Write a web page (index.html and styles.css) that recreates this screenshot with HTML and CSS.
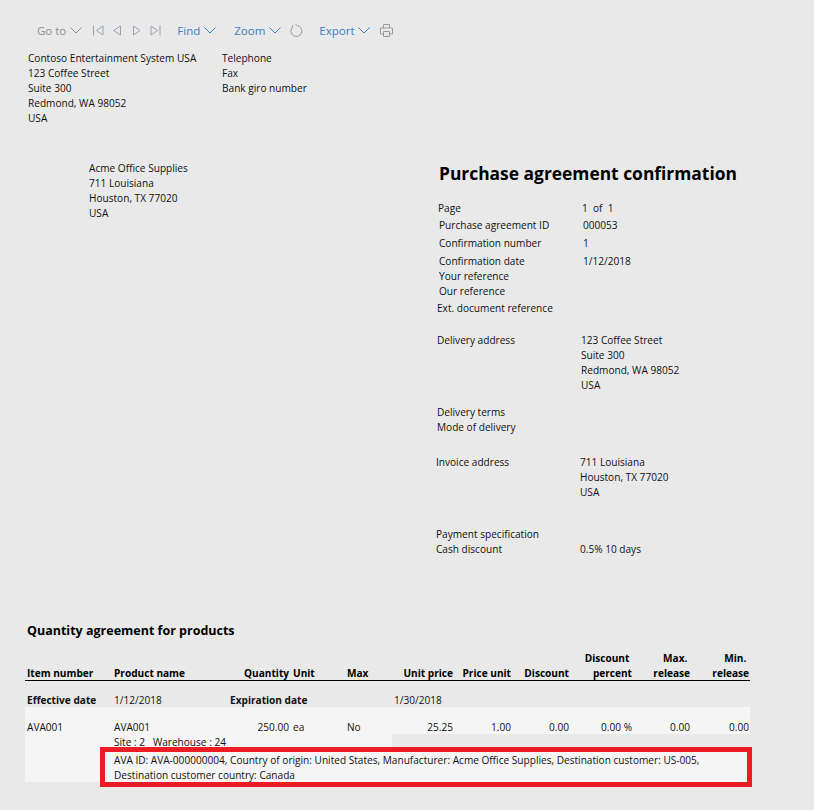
FILE: index.html
```html
<!DOCTYPE html>
<html>
<head>
	<title>Purchase agreement confirmation</title>
	<link rel="stylesheet" href="styles.css">
</head>
<body>
	<div class="toolbar">
		<span class="tool tool-off">Go to <svg class="chev" viewBox="0 0 12 7"><path d="M.5 .5L6 6l5.500-5.500"/></svg></span>
		<svg class="nav nav-first" viewBox="0 0 11 11"><path d="M.5 .5v10M10 1L3.500 5.500 10 10z"/></svg>
		<svg class="nav nav-prev" viewBox="0 0 11 11"><path d="M8.500 1L1.500 5.500l7 4.500z"/></svg>
		<svg class="nav nav-next" viewBox="0 0 11 11"><path d="M1.500 1l6.500 4.500-6.500 4.500z"/></svg>
		<svg class="nav nav-last" viewBox="0 0 11 11"><path d="M10 .5v10M1 1l6.500 4.500L1 10z"/></svg>
		<span class="tool find">Find <svg class="chev" viewBox="0 0 12 7"><path d="M.5 .5L6 6l5.500-5.500"/></svg></span>
		<span class="tool zoom">Zoom <svg class="chev" viewBox="0 0 12 7"><path d="M.5 .5L6 6l5.500-5.500"/></svg></span>
		<svg class="refresh" viewBox="0 0 13 13"><path d="M7.500 1.600A5.500 5.500 0 1 1 2.600 3M7.500 1.600L5.500 .5M2.600 3L2.400 1"/></svg>
		<span class="tool export">Export <svg class="chev" viewBox="0 0 12 7"><path d="M.5 .5L6 6l5.500-5.500"/></svg></span>
		<svg class="print" viewBox="0 0 13 13"><path d="M3.500 4V.5h6V4M3.500 10H.5V4h12v6h-3M3.500 7.500h6v5h-6z"/></svg>
	</div>

	<div class="company">
		<div class="company-addr">
			<div>Contoso Entertainment System USA</div>
			<div>123 Coffee Street</div>
			<div>Suite 300</div>
			<div>Redmond, WA 98052</div>
			<div>USA</div>
		</div>
		<div>
			<div>Telephone</div>
			<div>Fax</div>
			<div>Bank giro number</div>
		</div>
	</div>

	<div class="head">
		<div class="vendor">
			<div>Acme Office Supplies</div>
			<div>711 Louisiana</div>
			<div>Houston, TX 77020</div>
			<div>USA</div>
		</div>
		<div class="doc">
			<h1>Purchase agreement confirmation</h1>
			<div class="kv"><span>Page</span><span>1&nbsp; of&nbsp; 1</span></div>
			<div class="kv kv-id kv-agreement"><span>Purchase agreement ID</span><span>000053</span></div>
			<div class="kv kv-id kv-number"><span>Confirmation number</span><span>1</span></div>
			<div class="kv kv-id kv-date"><span>Confirmation date</span><span>1/12/2018</span></div>
			<div class="kv kv-id"><span>Your reference</span></div>
			<div class="kv kv-id"><span>Our reference</span></div>
			<div class="kv kv-ext"><span>Ext. document reference</span></div>

			<div class="kv kv-delivery">
				<span>Delivery address</span>
				<span>123 Coffee Street<br>Suite 300<br>Redmond, WA 98052<br>USA</span>
			</div>
			<div class="kv kv-terms"><span>Delivery terms<br>Mode of delivery</span></div>
			<div class="kv kv-invoice">
				<span>Invoice address</span>
				<span>711 Louisiana<br>Houston, TX 77020<br>USA</span>
			</div>
			<div class="kv kv-pay"><span>Payment specification</span></div>
			<div class="kv kv-cash"><span>Cash discount</span><span>0.5% 10 days</span></div>
		</div>
	</div>

	<h2>Quantity agreement for products</h2>

	<div class="lines">
		<div class="row row-head">
			<span>Item number</span>
			<span>Product name</span>
			<span class="num">Quantity</span>
			<span class="unit">Unit</span>
			<span>Max</span>
			<span class="num">Unit price</span>
			<span class="num">Price unit</span>
			<span class="num">Discount</span>
			<span class="num">Discount&nbsp;<br>percent</span>
			<span class="num">Max.&nbsp;<br>release</span>
			<span class="num">Min.&nbsp;<br>release</span>
		</div>
		<div class="dates">
			<strong class="d1">Effective date</strong>
			<span class="d2">1/12/2018</span>
			<strong class="d3">Expiration date</strong>
			<span>1/30/2018</span>
		</div>
		<div class="row row-item">
			<span>AVA001</span>
			<span>AVA001</span>
			<span class="num">250.00</span>
			<span class="unit">ea</span>
			<span>No</span>
			<span class="num">25.25</span>
			<span class="num">1.00</span>
			<span class="num">0.00</span>
			<span class="num">0.00 %</span>
			<span class="num">0.00</span>
			<span class="num">0.00</span>
		</div>
		<div class="site">Site : 2 &nbsp; Warehouse : 24</div>
		<div class="ava-wrap">
			<div class="ava-gutter"></div>
			<div class="ava">AVA ID: AVA-000000004, Country of origin: United States, Manufacturer: Acme Office Supplies, Destination customer: US-005, Destination customer country: Canada</div>
		</div>
	</div>
</body>
</html>
```

FILE: styles.css
```css
body {
	background-color: #e9e9e9;
	color: #111;
	font-family: "Open Sans", sans-serif;
	font-size: 10.1px;
	line-height: 15px;
	margin: 0;
	padding: 0;
}

.toolbar {
	display: flex;
	align-items: center;
	height: 20px;
	padding: 20px 0 0 37px;
	color: #3a80c4;
	font-size: 11.5px;
}

.tool {
	display: flex;
	align-items: center;
	gap: 4px;
}

.tool-off {
	color: #909090;
}

.chev {
	width: 12px;
	height: 7px;
	fill: none;
	stroke: currentColor;
}

.nav {
	width: 11px;
	height: 11px;
	fill: none;
	stroke: #9aa3ad;
}

.nav-first {
	margin-left: 11px;
}

.nav-prev {
	margin-left: 8px;
}

.nav-next {
	margin-left: 9px;
}

.nav-last {
	margin-left: 7px;
}

.find {
	margin-left: 16px;
}

.zoom {
	margin-left: 18px;
}

.refresh {
	width: 13px;
	height: 13px;
	margin-left: 9px;
	fill: none;
	stroke: #9a9a9a;
}

.export {
	margin-left: 16px;
}

.print {
	width: 13px;
	height: 13px;
	margin-left: 10px;
	fill: none;
	stroke: #9a9a9a;
}

.company {
	display: flex;
	margin-top: 11px;
	padding-left: 28px;
}

.company-addr {
	width: 194px;
}

.head {
	display: flex;
	margin-top: 35px;
}

.vendor {
	width: 349px;
	padding-left: 89px;
	box-sizing: border-box;
}

.doc {
	margin-left: 89px;
}

h1 {
	font-size: 17.4px;
	line-height: 24px;
	font-weight: 700;
	margin: 0 0 16px 1px;
	color: #000;
}

.kv {
	display: flex;
}

.kv span:first-child {
	width: 144px;
}

.kv-id {
	padding-left: 1px;
}

.kv-agreement {
	margin-top: 2px;
}

.kv-number {
	margin-top: 3px;
}

.kv-date {
	margin-top: 3px;
}

.kv-ext {
	margin-top: 2px;
	margin-left: -1px;
}

.kv-delivery {
	margin-top: 17px;
	margin-left: -1px;
}

.kv-terms {
	margin-top: 12px;
	margin-left: -1px;
}

.kv-invoice {
	margin-top: 20px;
	margin-left: -2px;
}

.kv-pay {
	margin-top: 27px;
	margin-left: -2px;
}

.kv-cash {
	margin-left: -2px;
}

h2 {
	font-size: 12.5px;
	line-height: 16px;
	font-weight: 700;
	margin: 66px 0 0 27px;
	color: #000;
}

.lines {
	width: 725px;
	margin: 11px 0 0 25px;
}

.row {
	display: grid;
	grid-template-columns: 87px 90px 85px 58px 46px 60px 58px 58px 63px 58px 59px;
	padding-left: 2px;
}

.num {
	text-align: right;
}

.unit {
	padding-left: 4px;
}

.row-head {
	align-items: end;
	font-weight: 700;
	border-bottom: 1px solid #000;
	color: #000;
}

.row-head span {
	padding-top: 1px;
	margin-bottom: -1px;
}

.dates {
	display: flex;
	height: 26px;
	padding: 12px 0 0 2px;
	box-sizing: border-box;
}

.d1 {
	width: 87px;
}

.d2 {
	width: 116px;
}

.d3 {
	width: 164px;
}

.row-item {
	height: 27px;
	padding-top: 13px;
	box-sizing: border-box;
	background-color: #f5f5f5;
}

.site {
	width: 367px;
	height: 13px;
	padding: 1px 0 0 89px;
	box-sizing: border-box;
	background-color: #f5f5f5;
}

.ava-wrap {
	display: flex;
	align-items: flex-start;
	margin-right: -2px;
}

.ava-gutter {
	flex: none;
	width: 75px;
	height: 35px;
	background-color: #f5f5f5;
}

.ava {
	flex: 1;
	height: 40px;
	padding: 1px 0 0 9px;
	box-sizing: border-box;
	border: 5px solid #ed1c24;
	background-color: #f5f5f5;
}
```
